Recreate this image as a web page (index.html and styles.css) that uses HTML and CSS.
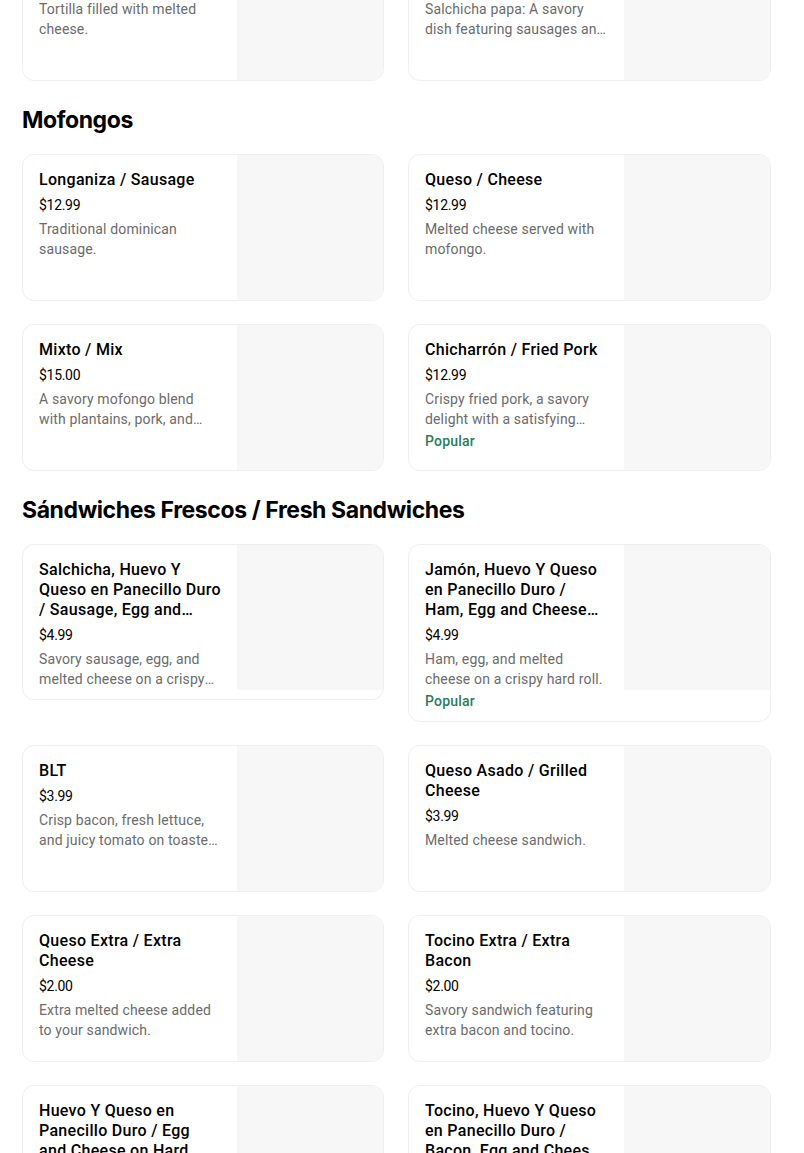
FILE: index.html
```html
<!DOCTYPE html>
<html lang="es">
<head>
<meta charset="utf-8">
<title>Menu</title>
<link rel="stylesheet" href="styles.css">
</head>
<body>
<main class="menu">
  <section class="section section-first">
    <div class="grid">
      <div class="card">
        <div class="info">
          <div class="title">Quesadilla</div>
          <div class="price">$8.99</div>
          <div class="desc">Tortilla filled with melted cheese.</div>
        </div>
        <div class="thumb"></div>
      </div>
      <div class="card">
        <div class="info">
          <div class="title">Salchipapa</div>
          <div class="price">$9.99</div>
          <div class="desc">Salchicha papa: A savory dish featuring sausages and fried potatoes.</div>
        </div>
        <div class="thumb"></div>
      </div>
    </div>
  </section>

  <section class="section">
    <h2 class="heading">Mofongos</h2>
    <div class="grid">
      <div class="card">
        <div class="info">
          <div class="title">Longaniza / Sausage</div>
          <div class="price">$12.99</div>
          <div class="desc">Traditional dominican sausage.</div>
        </div>
        <div class="thumb"></div>
      </div>
      <div class="card">
        <div class="info">
          <div class="title">Queso / Cheese</div>
          <div class="price">$12.99</div>
          <div class="desc">Melted cheese served with mofongo.</div>
        </div>
        <div class="thumb"></div>
      </div>
      <div class="card">
        <div class="info">
          <div class="title">Mixto / Mix</div>
          <div class="price">$15.00</div>
          <div class="desc">A savory mofongo blend with plantains, pork, and chicharrón.</div>
        </div>
        <div class="thumb"></div>
      </div>
      <div class="card">
        <div class="info">
          <div class="title">Chicharrón / Fried Pork</div>
          <div class="price">$12.99</div>
          <div class="desc">Crispy fried pork, a savory delight with a satisfying crunch.</div>
          <div class="badge">Popular</div>
        </div>
        <div class="thumb"></div>
      </div>
    </div>
  </section>

  <section class="section">
    <h2 class="heading">Sándwiches Frescos / Fresh Sandwiches</h2>
    <div class="grid">
      <div class="card">
        <div class="info">
          <div class="title">Salchicha, Huevo Y Queso en Panecillo Duro / Sausage, Egg and Cheese on Hard Roll</div>
          <div class="price">$4.99</div>
          <div class="desc">Savory sausage, egg, and melted cheese on a crispy hard roll.</div>
        </div>
        <div class="thumb"></div>
      </div>
      <div class="card">
        <div class="info">
          <div class="title">Jamón, Huevo Y Queso en Panecillo Duro / Ham, Egg and Cheese on Hard Roll</div>
          <div class="price">$4.99</div>
          <div class="desc">Ham, egg, and melted cheese on a crispy hard roll.</div>
          <div class="badge">Popular</div>
        </div>
        <div class="thumb"></div>
      </div>
      <div class="card">
        <div class="info">
          <div class="title">BLT</div>
          <div class="price">$3.99</div>
          <div class="desc">Crisp bacon, fresh lettuce, and juicy tomato on toasted bread.</div>
        </div>
        <div class="thumb"></div>
      </div>
      <div class="card">
        <div class="info">
          <div class="title">Queso Asado / Grilled Cheese</div>
          <div class="price">$3.99</div>
          <div class="desc">Melted cheese sandwich.</div>
        </div>
        <div class="thumb"></div>
      </div>
      <div class="card">
        <div class="info">
          <div class="title">Queso Extra / Extra Cheese</div>
          <div class="price">$2.00</div>
          <div class="desc">Extra melted cheese added to your sandwich.</div>
        </div>
        <div class="thumb"></div>
      </div>
      <div class="card">
        <div class="info">
          <div class="title">Tocino Extra / Extra Bacon</div>
          <div class="price">$2.00</div>
          <div class="desc">Savory sandwich featuring extra bacon and tocino.</div>
        </div>
        <div class="thumb"></div>
      </div>
      <div class="card">
        <div class="info">
          <div class="title">Huevo Y Queso en Panecillo Duro / Egg and Cheese on Hard Roll</div>
          <div class="price">$3.99</div>
          <div class="desc">Fluffy egg and melted cheese on a crispy hard roll.</div>
        </div>
        <div class="thumb"></div>
      </div>
      <div class="card">
        <div class="info">
          <div class="title">Tocino, Huevo Y Queso en Panecillo Duro / Bacon, Egg and Cheese on Hard Roll</div>
          <div class="price">$4.99</div>
          <div class="desc">Crispy bacon, egg, and melted cheese on a hard roll.</div>
        </div>
        <div class="thumb"></div>
      </div>
    </div>
  </section>
</main>
</body>
</html>
```

FILE: styles.css
```css
* { box-sizing: border-box; }

html, body {
  margin: 0;
  padding: 0;
  background: #ffffff;
}

body {
  font-family: Roboto, "Liberation Sans", sans-serif;
  color: #000000;
  overflow: hidden;
}

.menu {
  width: 749px;
  margin-left: 22px;
}

.section-first {
  margin-top: -66px;
}

.heading {
  margin: 23px 0 18px;
  font-family: Inter, "Noto Sans", sans-serif;
  font-size: 23px;
  line-height: 32px;
  font-weight: 700;
  letter-spacing: -0.4px;
}

.grid {
  display: grid;
  grid-template-columns: 362px 363px;
  column-gap: 24px;
  row-gap: 23px;
  align-items: start;
}

.card {
  display: flex;
  justify-content: space-between;
  align-items: flex-start;
  min-height: 147px;
  border: 1px solid #efefef;
  border-radius: 12px;
  overflow: hidden;
  background: #ffffff;
}

.info {
  width: 215px;
  padding: 15px 16px 10px 16px;
  display: flex;
  flex-direction: column;
}

.title {
  font-size: 16px;
  line-height: 20px;
  font-weight: 500;
  letter-spacing: 0.3px;
  color: #000000;
  display: -webkit-box;
  -webkit-line-clamp: 3;
  -webkit-box-orient: vertical;
  overflow: hidden;
}

.price {
  margin-top: 5px;
  font-size: 14px;
  line-height: 20px;
  font-weight: 400;
  color: #000000;
  letter-spacing: -0.3px;
}

.desc {
  margin-top: 4px;
  font-size: 14px;
  line-height: 20px;
  letter-spacing: 0.15px;
  color: #6b6b6b;
  display: -webkit-box;
  -webkit-line-clamp: 2;
  -webkit-box-orient: vertical;
  overflow: hidden;
}

.badge {
  margin-top: 2px;
  font-size: 14px;
  line-height: 20px;
  font-weight: 500;
  letter-spacing: 0.2px;
  color: #2a7d5a;
}

.thumb {
  flex: 0 0 146px;
  width: 146px;
  height: 145px;
  background: #f7f7f7;
}
```
